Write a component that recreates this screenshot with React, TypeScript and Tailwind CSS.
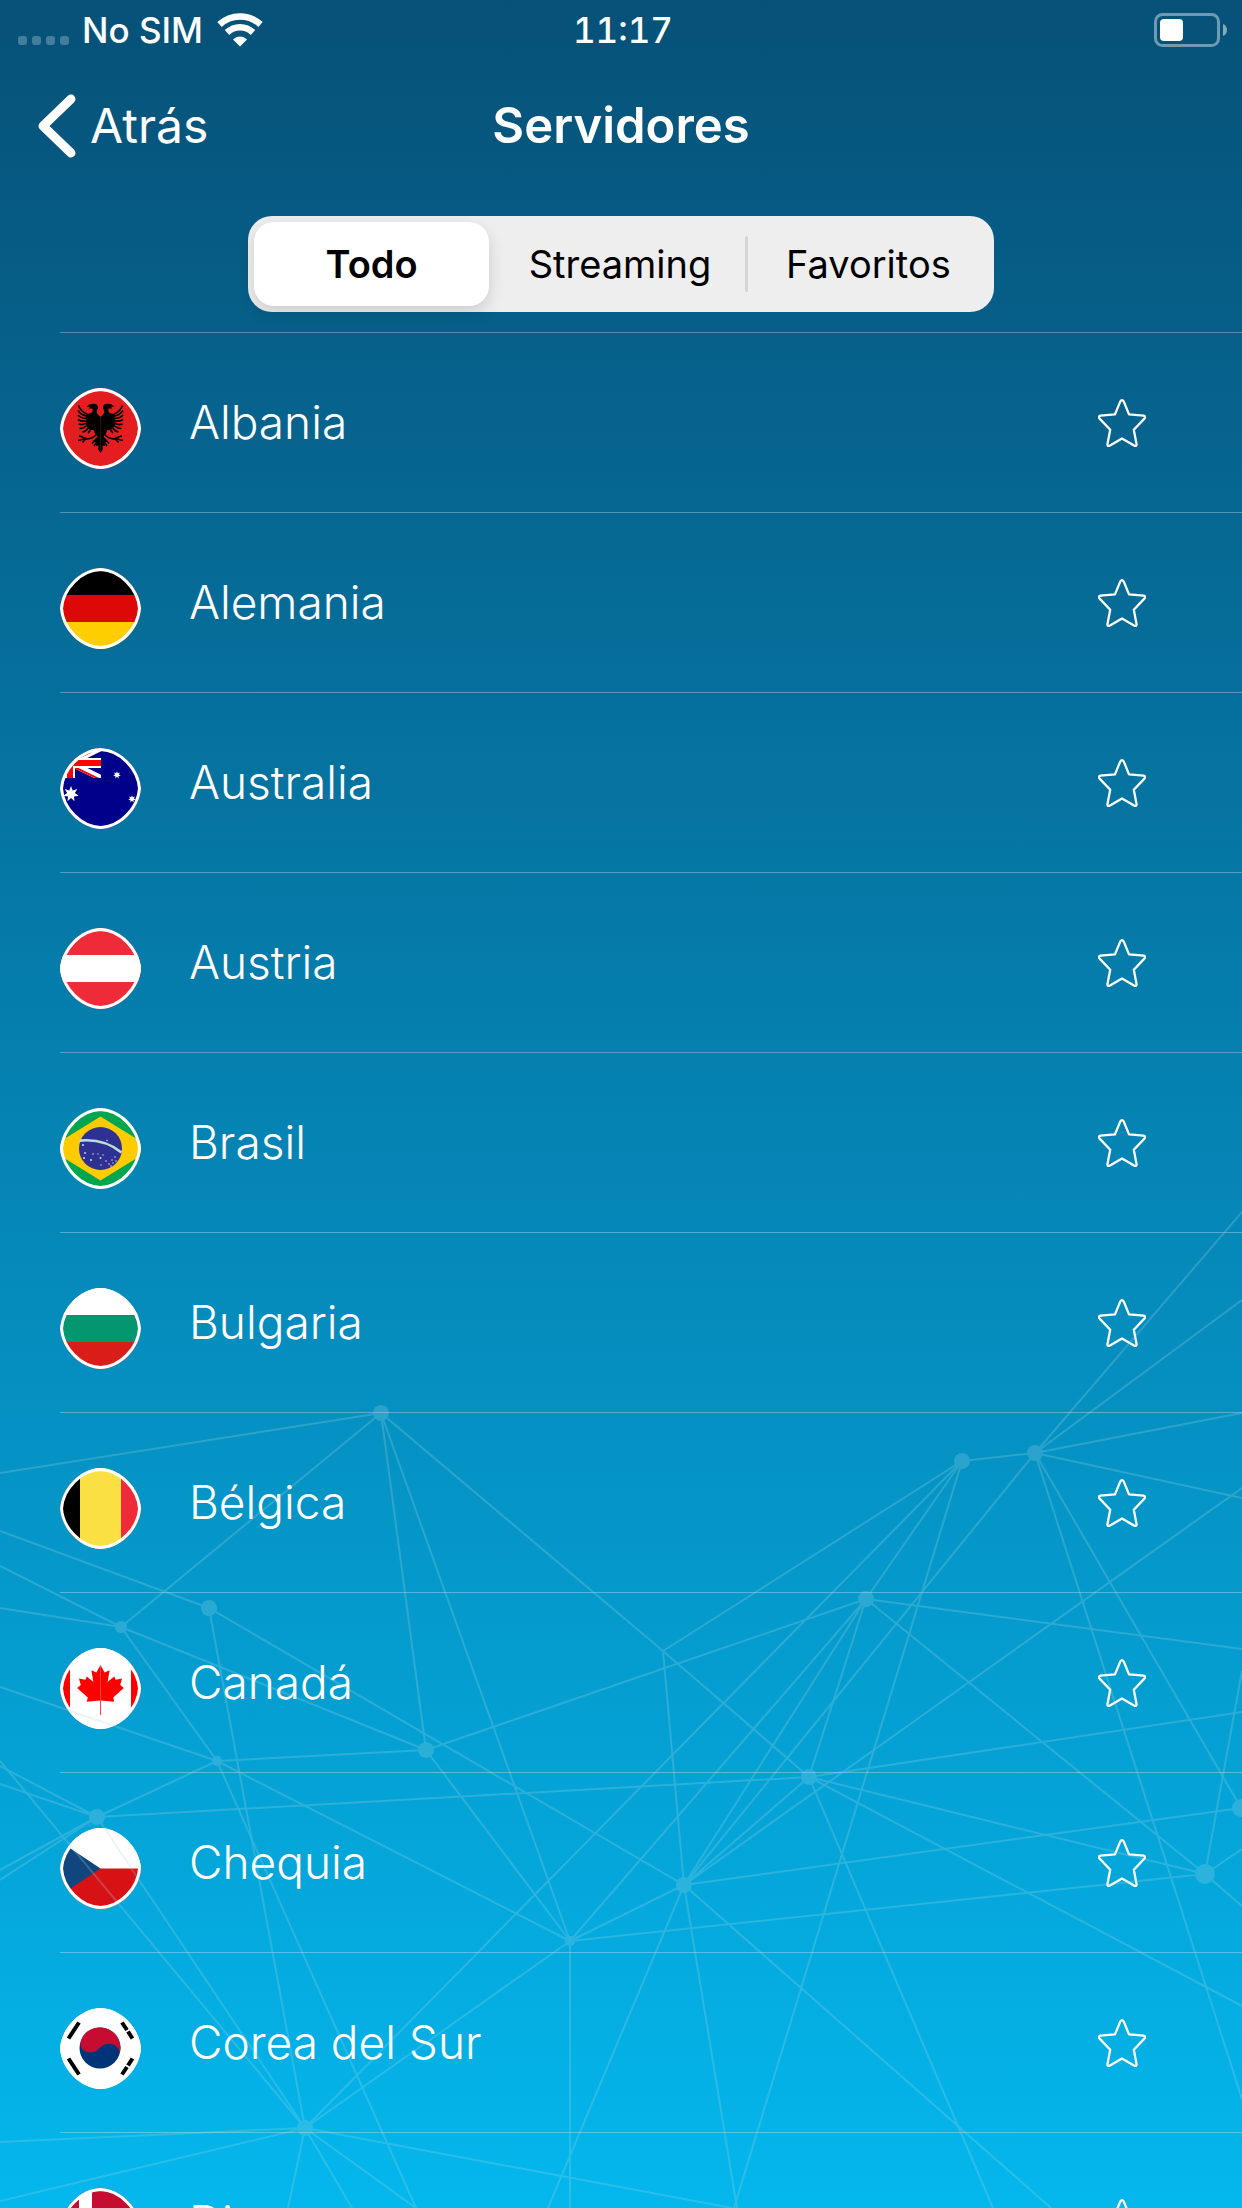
import { useState } from 'react';
import type { ReactNode } from 'react';

type Server = {
  id: string;
  name: string;
  flag: ReactNode;
};

type Tab = {
  id: string;
  label: string;
};

const FLAG_SHAPE = 'M40.5 0C61 .6 79.600 20 81 40.500C79.600 61 61 80.400 40.500 81C20 80.400 1.400 61 0 40.500C1.400 20 20 .6 40.500 0Z';

const AUSTRALIA_STAR = 'M0 -8L1.7 -3.4L6.3 -5L3.8 -.9L7.8 1.8L3 2.4L3.5 7.2L0 3.9L-3.5 7.2L-3 2.4L-7.8 1.8L-3.8 -.9L-6.3 -5L-1.7 -3.4Z';

const EAGLE_BODY = 'M40.500 29L42.600 27C44.200 25.600 45 24 43.600 21.600C42.400 19.400 43 16.400 46.500 15.800C49.500 15.200 52 16.400 54.500 18.800L50.500 18.600L52.500 20.600L48.600 20.600C47.600 22.600 48.600 25 51 25.600C53 26.200 54.800 25.400 55 27V37.500C53 40.500 50 42.500 47.500 42L46 45.500L43.600 48L46.500 54L44.500 54L45 58L42.500 57.500L42.800 61.500L40.500 65Z';

const EAGLE_FEATHERS = 'M54 26C58 24.500 61 21.500 62.500 17.500M54 28C58 27.500 61 25.500 63 22.500M54 30.500C58 30.500 61 29.500 63 27M54 33C58 33.500 61 33 63 31.500M54 35C57 36.500 60 37 62.500 36M53 36.500C56 39.500 58.500 40.500 61.500 40.500M51.500 38C53.500 42 56 43.500 58.500 44M49.500 39C50.500 42.500 51.500 44 53 45M44.500 46.500C48 50 52 51.500 56 50.500M55 50.500L62 47.800M55 50.500L63 52.500M55 50.500L58.500 54.500M44 50L49 55.500M43.500 53L47 58';

const MAPLE_HALF = 'M40.5 17L44.6 24.6L49.6 22.2L47.6 34L54.2 28.6L55.6 31.8L62 30.6L60.2 37L63.8 40L53.2 49.6L54.2 53.8L41 52.6L41 67L40.5 67Z';

const servers: Server[] = [
  {
    id: 'al',
    name: 'Albania',
    flag: (
      <>
        <rect width="81" height="81" fill="#e41e20" />
        <path d={EAGLE_BODY} />
        <path d={EAGLE_BODY} transform="matrix(-1 0 0 1 81 0)" />
        <g fill="none" stroke="#000" strokeWidth="1.700">
          <path d={EAGLE_FEATHERS} />
          <path d={EAGLE_FEATHERS} transform="matrix(-1 0 0 1 81 0)" />
        </g>
      </>
    ),
  },
  {
    id: 'de',
    name: 'Alemania',
    flag: (
      <>
        <rect width="81" height="27" />
        <rect y="27" width="81" height="27" fill="#dd0808" />
        <rect y="54" width="81" height="27" fill="#ffce00" />
      </>
    ),
  },
  {
    id: 'au',
    name: 'Australia',
    flag: (
      <>
        <rect width="81" height="81" fill="#00008b" />
        <svg x="-20" y="0" width="61" height="30" viewBox="0 0 61 30">
          <path d="M0 0L61 30M61 0L0 30" stroke="#fff" strokeWidth="6" />
          <path d="M30 17L61 32M30 14L61 -1" stroke="#f00" strokeWidth="2" />
          <path d="M30 0V30M0 15H61" stroke="#fff" strokeWidth="10" />
          <path d="M30 0V30M0 15H61" stroke="#f00" strokeWidth="6" />
        </svg>
        <path d={AUSTRALIA_STAR} fill="#fff" transform="translate(11 46)" />
        <path d={AUSTRALIA_STAR} fill="#fff" transform="translate(57 27) scale(.48)" />
        <path d={AUSTRALIA_STAR} fill="#fff" transform="translate(72 51) scale(.48)" />
      </>
    ),
  },
  {
    id: 'at',
    name: 'Austria',
    flag: (
      <>
        <rect width="81" height="81" fill="#ef2b3a" />
        <rect y="27" width="81" height="27" fill="#fff" />
      </>
    ),
  },
  {
    id: 'br',
    name: 'Brasil',
    flag: (
      <>
        <rect width="81" height="81" fill="#00a550" />
        <path d="M40.5 8.5L92.5 40.5L40.5 72.5L-11.5 40.5Z" fill="#fecb00" />
        <circle cx="40.5" cy="40.5" r="21.5" fill="#2e3192" />
        <path d="M19.6 32.6C35 31.2 50 35 61.5 44.6" fill="none" stroke="#b9e0d2" strokeWidth="2.6" />
        <g fill="#fff" fillOpacity=".8">
          <circle cx="23" cy="37" r="1" />
          <circle cx="47" cy="32.5" r=".8" />
          <circle cx="25" cy="45" r=".9" />
          <circle cx="24" cy="50" r="1" />
          <circle cx="31" cy="52" r="1" />
          <circle cx="33" cy="46" r=".8" />
          <circle cx="40.5" cy="50" r="1" />
          <circle cx="38" cy="46" r=".7" />
          <circle cx="43" cy="47" r=".7" />
          <circle cx="41" cy="57" r=".7" />
          <circle cx="46" cy="53" r=".8" />
          <circle cx="49" cy="56" r=".8" />
          <circle cx="52" cy="52" r=".8" />
          <circle cx="51" cy="58" r=".8" />
          <circle cx="55" cy="49" r=".8" />
          <circle cx="56" cy="53" r=".8" />
          <circle cx="53" cy="55" r=".7" />
        </g>
      </>
    ),
  },
  {
    id: 'bg',
    name: 'Bulgaria',
    flag: (
      <>
        <rect width="81" height="27" fill="#fff" />
        <rect y="27" width="81" height="27" fill="#04966e" />
        <rect y="54" width="81" height="27" fill="#d91e1a" />
      </>
    ),
  },
  {
    id: 'be',
    name: 'Bélgica',
    flag: (
      <>
        <rect width="81" height="81" fill="#fae042" />
        <rect width="20" height="81" />
        <rect x="61" width="20" height="81" fill="#ef2b3a" />
      </>
    ),
  },
  {
    id: 'ca',
    name: 'Canadá',
    flag: (
      <>
        <rect width="81" height="81" fill="#fff" />
        <rect width="10" height="81" fill="#f00" />
        <rect x="71" width="10" height="81" fill="#f00" />
        <path d={MAPLE_HALF} fill="#f00" />
        <path d={MAPLE_HALF} fill="#f00" transform="matrix(-1 0 0 1 81 0)" />
      </>
    ),
  },
  {
    id: 'cz',
    name: 'Chequia',
    flag: (
      <>
        <rect width="81" height="81" fill="#fff" />
        <rect y="40.5" width="81" height="40.5" fill="#d81214" />
        <path d="M40.5 40.5L-20 0V81Z" fill="#11457e" />
      </>
    ),
  },
  {
    id: 'kr',
    name: 'Corea del Sur',
    flag: (
      <>
        <rect width="81" height="81" fill="#fff" />
        <circle cx="40" cy="40" r="20.5" fill="#003478" />
        <path d="M20.500 36C21 26 30 19.500 40 19.500C51 19.500 60.500 28 60.500 40C60.500 41.500 60 43.500 59.500 45C59 38 52 34 45 36.500C39 39 38 44 31 44.500C25 45 20.500 41 20.500 36Z" fill="#c60c30" />
        <path d="M8.500 30.500L19 14.500M62 14.500L67 22M68 23.500L72.500 30.500M8.500 50.500L19 66.500M62 66.500L67 59M68 57.500L72.500 50.500" stroke="#000" strokeWidth="4" />
      </>
    ),
  },
  {
    id: 'dk',
    name: 'Dinamarca',
    flag: (
      <>
        <rect width="81" height="81" fill="#c60c30" />
        <path d="M25.500 0V81M0 40.500H81" stroke="#fff" strokeWidth="13" />
      </>
    ),
  },
];

const tabs: Tab[] = [
  { id: 'all', label: 'Todo' },
  { id: 'streaming', label: 'Streaming' },
  { id: 'favorites', label: 'Favoritos' },
];

// [x, y, radius]
const nodes = [
  [381, 1413, 8],
  [209, 1608, 8],
  [121, 1627, 6],
  [426, 1750, 8],
  [217, 1761, 5],
  [97, 1817, 8],
  [570, 1941, 5],
  [305, 2128, 8],
  [962, 1461, 8],
  [1035, 1453, 8],
  [866, 1599, 8],
  [809, 1777, 8],
  [684, 1885, 8],
  [1205, 1874, 10],
  [1241, 1808, 9],
];

// [x1, y1, x2, y2]
const links = [
  [381, 1413, 0, 1473],
  [381, 1413, 121, 1627],
  [381, 1413, 426, 1750],
  [381, 1413, 570, 1941],
  [381, 1413, 663, 1651],
  [209, 1608, 0, 1531],
  [209, 1608, 684, 1885],
  [209, 1608, 305, 2128],
  [121, 1627, 0, 1566],
  [121, 1627, 0, 1608],
  [121, 1627, 217, 1761],
  [121, 1627, 426, 1750],
  [426, 1750, 866, 1599],
  [426, 1750, 570, 1941],
  [217, 1761, 0, 1687],
  [217, 1761, 426, 1750],
  [217, 1761, 97, 1817],
  [217, 1761, 570, 1941],
  [217, 1761, 416, 2208],
  [97, 1817, 0, 1766],
  [97, 1817, 0, 1784],
  [97, 1817, 0, 1870],
  [97, 1817, 0, 1880],
  [97, 1817, 809, 1777],
  [97, 1817, 305, 2128],
  [0, 1761, 305, 2128],
  [570, 1941, 684, 1885],
  [570, 1941, 1205, 1874],
  [570, 1941, 570, 2208],
  [570, 1941, 305, 2128],
  [570, 1941, 866, 1599],
  [305, 2128, 962, 1461],
  [305, 2128, 0, 2142],
  [305, 2128, 0, 2201],
  [305, 2128, 288, 2208],
  [305, 2128, 352, 2208],
  [305, 2128, 416, 2208],
  [305, 2128, 732, 2208],
  [684, 1885, 1035, 1453],
  [684, 1885, 866, 1599],
  [684, 1885, 809, 1777],
  [684, 1885, 1242, 1488],
  [684, 1885, 663, 1651],
  [684, 1885, 1241, 1808],
  [684, 1885, 548, 2208],
  [684, 1885, 737, 2208],
  [684, 1885, 1051, 2208],
  [962, 1461, 1035, 1453],
  [962, 1461, 663, 1651],
  [962, 1461, 866, 1599],
  [962, 1461, 734, 2208],
  [866, 1599, 809, 1777],
  [866, 1599, 1205, 1874],
  [866, 1599, 1242, 1649],
  [1035, 1453, 1242, 1212],
  [1035, 1453, 1242, 1300],
  [1035, 1453, 1242, 1413],
  [1035, 1453, 1242, 1498],
  [1035, 1453, 1241, 1808],
  [1035, 1453, 1242, 2099],
  [809, 1777, 663, 1651],
  [809, 1777, 1242, 1712],
  [809, 1777, 1205, 1874],
  [809, 1777, 1242, 2006],
  [809, 1777, 993, 2208],
  [1205, 1874, 1242, 1671],
  [1205, 1874, 1242, 1849],
  [1205, 1874, 1242, 1906],
];

function NetworkOverlay() {
  return (
    <svg
      className="pointer-events-none absolute inset-0 size-full"
      viewBox="0 0 1242 2208"
      preserveAspectRatio="xMidYMax slice"
      aria-hidden="true"
    >
      <g fill="#a5dce6" stroke="#a5dce6" strokeWidth="2" opacity=".24">
        {links.map(([x1, y1, x2, y2]) => (
          <line key={`${x1}-${y1}-${x2}-${y2}`} x1={x1} y1={y1} x2={x2} y2={y2} />
        ))}
        {nodes.map(([x, y, r]) => (
          <circle key={`${x}-${y}`} cx={x} cy={y} r={r} stroke="none" />
        ))}
      </g>
    </svg>
  );
}

function Flag({ id, children }: { id: string; children: ReactNode }) {
  return (
    <svg className="mt-3 size-[81px] shrink-0" viewBox="0 0 81 81" aria-hidden="true">
      <clipPath id={`flag-${id}`}>
        <path d={FLAG_SHAPE} />
      </clipPath>
      <g clipPath={`url(#flag-${id})`}>
        {children}
        <path d={FLAG_SHAPE} fill="none" stroke="#fff" strokeWidth="6" />
      </g>
    </svg>
  );
}

function StatusBar() {
  return (
    <div className="grid h-15 shrink-0 grid-cols-3 items-center pr-3.5 pl-[18px] text-[35px] font-medium">
      <div className="flex items-center">
        <svg className="mt-5 h-[9px] w-13" viewBox="0 0 52 9" fill="#fff" fillOpacity=".25" aria-hidden="true">
          <rect width="9" height="9" rx="3" />
          <rect x="14" width="9" height="9" rx="3" />
          <rect x="28" width="9" height="9" rx="3" />
          <rect x="42" width="9" height="9" rx="3" />
        </svg>
        <span className="ml-3">No SIM</span>
        <svg className="ml-3.5 h-[34px] w-[46px]" viewBox="0 0 46 34" fill="none" stroke="#fff" aria-hidden="true">
          <path d="M2.500 11.500C14 .8 32 .8 43.500 11.500" strokeWidth="6.500" />
          <path d="M10 19.500C17.500 12.600 28.500 12.600 36 19.500" strokeWidth="6.500" />
          <path d="M23 33.500L16 26.500C20 22.600 26 22.600 30 26.500Z" fill="#fff" stroke="none" />
        </svg>
      </div>
      <time className="text-center tabular-nums">11:17</time>
      <svg className="h-[34px] w-[74px] justify-self-end" viewBox="0 0 74 34" fill="#fff" aria-label="Batería">
        <rect x="1.500" y="1.500" width="63" height="31" rx="7" fill="none" stroke="#fff" strokeOpacity=".42" strokeWidth="3" />
        <rect x="6" y="6" width="23" height="22" rx="4" />
        <path d="M69 11C72 12 73 15 73 17C73 19 72 22 69 23Z" fillOpacity=".5" />
      </svg>
    </div>
  );
}

export default function App() {
  const [activeTab, setActiveTab] = useState('all');
  const [favorites, setFavorites] = useState<string[]>([]);

  const toggleFavorite = (id: string) => {
    setFavorites(prev => prev.includes(id) ? prev.filter(item => item !== id) : [...prev, id]);
  };

  return (
    <div className="relative flex h-screen flex-col overflow-hidden bg-linear-to-b from-[#065178] via-[#057dac] via-45% to-[#04b7ed] font-[Inter,sans-serif] text-white">
      <StatusBar />

      {/* Navigation */}
      <header className="grid h-33 shrink-0 grid-cols-[1fr_auto_1fr] items-center px-9">
        <a href="#" className="flex items-center gap-3.5 text-[48px]">
          <svg className="h-16 w-10" viewBox="0 0 40 64" fill="none" stroke="#fff" strokeWidth="9" strokeLinecap="round" strokeLinejoin="round" aria-hidden="true">
            <path d="M35 5L7 32L35 59" />
          </svg>
          Atrás
        </a>
        <h1 className="text-[49px] font-semibold">Servidores</h1>
      </header>

      {/* Filter */}
      <div className="flex shrink-0 justify-center pt-6 pb-5">
        <div role="tablist" className="grid h-24 w-3/5 grid-cols-3 rounded-3xl bg-[#eeeeef] text-[38px] text-black">
          {tabs.map(tab => (
            <button
              key={tab.id}
              type="button"
              role="tab"
              aria-selected={activeTab === tab.id}
              onClick={() => setActiveTab(tab.id)}
              className="relative p-1.5 pr-2 not-first:before:absolute not-first:before:top-5 not-first:before:bottom-5 not-first:before:left-0 not-first:before:w-[3px] not-first:before:rounded-full not-first:before:bg-[#d5d5d7] aria-selected:font-semibold [[aria-selected=true]+&]:before:hidden"
            >
              <span className={`flex h-full items-center justify-center rounded-[20px] ${activeTab === tab.id ? 'bg-white shadow-[0_6px_16px_rgba(0,0,0,0.14)]' : ''}`}>
                {tab.label}
              </span>
            </button>
          ))}
        </div>
      </div>

      {/* Servers */}
      <ul className="min-h-0 flex-1 overflow-y-auto pl-15 [scrollbar-width:none]">
        {servers.map(server => (
          <li key={server.id} className="flex h-45 items-center gap-12 border-t border-white/30 pr-24">
            <Flag id={server.id}>{server.flag}</Flag>
            <span className="flex-1 text-[46px] font-light">{server.name}</span>
            <button
              type="button"
              aria-label={`Favorito: ${server.name}`}
              aria-pressed={favorites.includes(server.id)}
              onClick={() => toggleFavorite(server.id)}
            >
              <svg
                className="size-12"
                viewBox="0 0 48 48"
                fill={favorites.includes(server.id) ? '#fff' : 'none'}
                stroke="#fff"
                strokeWidth="2.300"
                strokeLinejoin="round"
                aria-hidden="true"
              >
                <path d="M22.200 2.600Q24 -.2 25.800 2.600L31 15.400L45.500 16.600Q48.300 17.400 46.400 19.600L35.800 30.800L38.600 45.400Q38.500 47.900 36 46.600L24 39.600L12 46.600Q9.500 47.900 9.400 45.400L12.200 30.800L1.600 19.600Q-.3 17.400 2.500 16.600L17 15.400Z" />
              </svg>
            </button>
          </li>
        ))}
      </ul>

      <NetworkOverlay />
    </div>
  );
}
